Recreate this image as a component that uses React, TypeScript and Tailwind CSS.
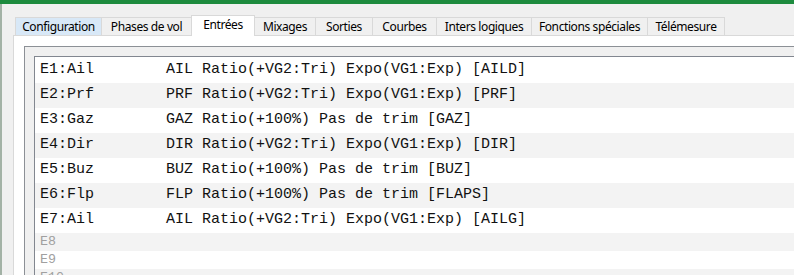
import React from "react";

const tabs = [
  { label: "Configuration", w: 86, hover: true },
  { label: "Phases de vol", w: 90 },
  { label: "Entrées", w: 64, selected: true },
  { label: "Mixages", w: 60, noLeft: true },
  { label: "Sorties", w: 57 },
  { label: "Courbes", w: 64 },
  { label: "Inters logiques", w: 95 },
  { label: "Fonctions spéciales", w: 116 },
  { label: "Télémesure", w: 78, last: true },
];

const rows: { name: string; desc: string; empty?: boolean }[] = [
  { name: "E1:Ail", desc: "AIL Ratio(+VG2:Tri) Expo(VG1:Exp) [AILD]" },
  { name: "E2:Prf", desc: "PRF Ratio(+VG2:Tri) Expo(VG1:Exp) [PRF]" },
  { name: "E3:Gaz", desc: "GAZ Ratio(+100%) Pas de trim [GAZ]" },
  { name: "E4:Dir", desc: "DIR Ratio(+VG2:Tri) Expo(VG1:Exp) [DIR]" },
  { name: "E5:Buz", desc: "BUZ Ratio(+100%) Pas de trim [BUZ]" },
  { name: "E6:Flp", desc: "FLP Ratio(+100%) Pas de trim [FLAPS]" },
  { name: "E7:Ail", desc: "AIL Ratio(+VG2:Tri) Expo(VG1:Exp) [AILG]" },
  { name: "E8", desc: "", empty: true },
  { name: "E9", desc: "", empty: true },
  { name: "E10", desc: "", empty: true },
  { name: "E11", desc: "", empty: true },
];

export default function App() {
  return (
    <div className="w-[794px] h-[275px] overflow-hidden bg-[#f0f0f0] flex flex-col">
      <div className="h-[4px] w-full bg-[#1d8b3e] shrink-0" />
      <div className="flex flex-1">
        <div className="w-[2px] bg-[#a3b2a6] shrink-0" />
        <div className="w-[900px] shrink-0 pl-[11px] flex flex-col">
          {/* Tab bar */}
          <div className="h-[31px] flex items-end pl-[2px] relative z-10">
            {tabs.map((t) => (
              <div
                key={t.label}
                style={{ width: t.w }}
                className={
                  "flex items-center justify-center border-t border-[#d9d9d9] text-[12px] tracking-[-0.4px] text-black " +
                  (t.selected
                    ? "h-[21px] -mb-px bg-white border-l border-r pb-[2px]"
                    : t.hover
                    ? "h-[18px] bg-[#d8e8f7] border-l"
                    : "h-[18px] bg-[#f0f0f0] " + (t.noLeft ? "" : "border-l ") + (t.last ? "border-r" : ""))
                }
              >
                <span style={{ fontFamily: '"Noto Sans", sans-serif' }}>{t.label}</span>
              </div>
            ))}
          </div>
          {/* Panel */}
          <div className="flex-1 bg-white border-l border-t border-[#d9d9d9] pl-[10px] pt-[10px]">
            <div className="h-[400px] border border-[#8c9096] bg-[#f0f0f0] pl-[9px] pt-[9px]">
              <div className="h-[400px] border border-[#828790] bg-white pt-px">
                {rows.map((r, i) => (
                  <div
                    key={r.name}
                    className={
                      "flex items-center pl-[5px] whitespace-pre " +
                      (r.empty ? "h-[18px] " : "h-[25px] ") +
                      (i % 2 === 1 ? "bg-[#f3f3f3]" : "bg-white")
                    }
                    style={{ fontFamily: '"Liberation Mono", "Courier New", monospace' }}
                  >
                    {r.empty ? (
                      <span className="text-[13.3px] text-[#a0a0a0]">{r.name}</span>
                    ) : (
                      <>
                        <span className="w-[126px] shrink-0 text-[15px] text-[#111]">{r.name}</span>
                        <span className="text-[15px] text-[#111]">{r.desc}</span>
                      </>
                    )}
                  </div>
                ))}
              </div>
            </div>
          </div>
        </div>
      </div>
    </div>
  );
}
